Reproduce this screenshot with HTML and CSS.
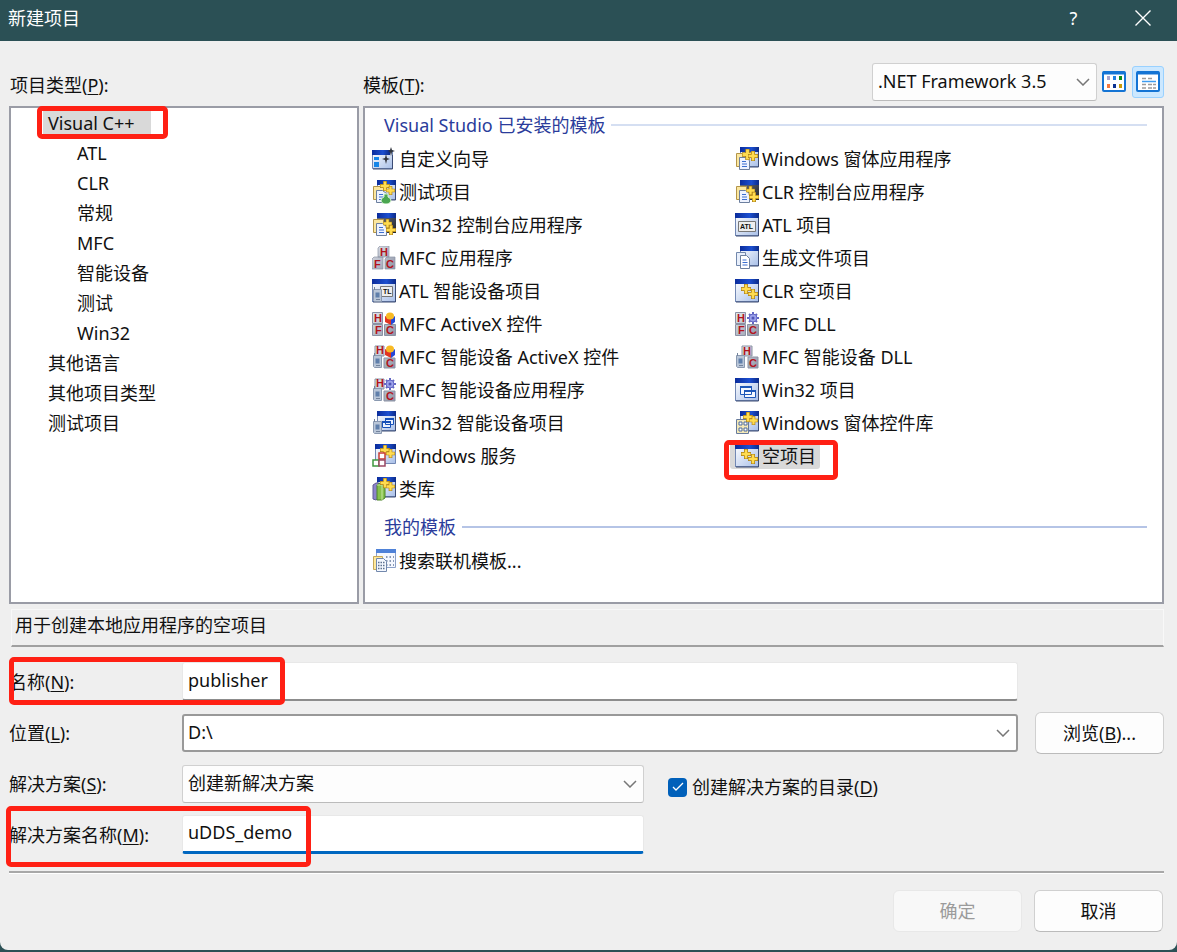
FILE: index.html
```html
<!DOCTYPE html>
<html lang="zh-CN">
    <head>
        <meta charset="UTF-8" />
        <meta name="viewport" content="width=device-width, initial-scale=1.0" />
        <title>新建项目</title>
        <link rel="stylesheet" href="styles.css">
    </head>
    <body>
        <!-- ICON PARTS -->
        <svg class="defs" width="0" height="0" aria-hidden="true">
            <defs>
                <linearGradient id="bar" x1="0" x2="1"><stop offset="0" stop-color="#0a2c9c"/><stop offset="0.6" stop-color="#1c4fd0"/><stop offset="1" stop-color="#0b2a88"/></linearGradient>
                <linearGradient id="pane" x1="0" y1="0" x2="1" y2="1"><stop offset="0" stop-color="#ffffff"/><stop offset="1" stop-color="#a8bfe8"/></linearGradient>
                <linearGradient id="dark" x1="0" y1="0" x2="1" y2="1"><stop offset="0" stop-color="#6b7488"/><stop offset="1" stop-color="#20242e"/></linearGradient>
                <linearGradient id="cube" x1="0" y1="0" x2="1" y2="1"><stop offset="0" stop-color="#e4e7ee"/><stop offset="1" stop-color="#8d94a6"/></linearGradient>
                <symbol id="plus" viewBox="0 0 10 10"><path d="M5 0v10M0 5h10" stroke="#a87c14" stroke-width="4"/><path d="M5 .5v9M.5 5h9" stroke="#ffdc50" stroke-width="2.6"/></symbol>
                <symbol id="window" viewBox="0 0 24 24"><rect x=".5" y=".5" width="23" height="22" fill="url(#pane)" stroke="#7288b4"/><path d="M0 0h24v5H0z" fill="url(#bar)"/><path d="M23.5 5v18H1" fill="none" stroke="#3c4c74"/></symbol>
                <symbol id="small-window" viewBox="0 0 24 24"><rect x="5.5" y=".5" width="18" height="19" fill="url(#pane)" stroke="#7288b4"/><path d="M5 0h19v5H5z" fill="url(#bar)"/><path d="M23.5 5v15H9" fill="none" stroke="#3c4c74"/></symbol>
                <symbol id="docs" viewBox="0 0 24 24"><path d="M1.5 6.5h10v13h-10z" fill="#fbe7a0" stroke="#b49548"/><path d="M4.500 10.500h6l4 3v9h-10z" fill="#eef3ff" stroke="#6c7f9e"/><path d="M7 14.500h4M7 17h5M7 19.500h5" stroke="#3c6fd0"/></symbol>
                <symbol id="device" viewBox="0 0 24 24"><path d="M1.5 10.5h8v12h-7l-1-1z" fill="#b9c6d8" stroke="#8a99b0"/><path d="M3.500 13.500h4v5h-4z" fill="#5f7fab"/><path d="M2.500 11V8M4 20.500h4" stroke="#73839c"/></symbol>

                <symbol id="i-wizard" viewBox="0 0 24 24"><path d="M.5 3.500h20v18H.5z" fill="url(#pane)" stroke="#7288b4"/><path d="M0 3h18v5H0z" fill="url(#bar)"/><path d="M2 10h5v3H2zM2 15h5v5H2z" fill="#1686e8"/><path d="M20.500 8v14H1" stroke="#3c4c74" fill="none"/><path d="M14 7l1 4 3 1-3 1-1 4-1-4-3-1 3-1zM19 0l1 3 3 1-3 1-1 4-1-4-2-1 2-1z" fill="#30343c"/></symbol>
                <symbol id="i-test" viewBox="0 0 24 24"><use href="#small-window"/><use href="#docs"/><use href="#plus" x="8" y="1" width="10" height="10"/><use href="#plus" x="14" y="6" width="9" height="9"/><path d="M12 14h4v3c5 2 3 7-2 7s-7-5-2-7z" fill="#4aa650" stroke="#d7f3d2"/></symbol>
                <symbol id="i-console" viewBox="0 0 24 24"><path d="M5 0h19v20H5z" fill="url(#dark)"/><path d="M5 0h19v5H5z" fill="url(#bar)"/><use href="#docs"/><use href="#plus" x="11" y="6" width="9" height="9"/><use href="#plus" x="14" y="12" width="10" height="10"/></symbol>
                <symbol id="i-forms" viewBox="0 0 24 24"><use href="#small-window"/><use href="#docs"/><use href="#plus" x="7" y="2" width="11" height="11"/><use href="#plus" x="13" y="4" width="10" height="10"/></symbol>
                <symbol id="i-mfc" viewBox="0 0 24 24"><path d="M6 2l2-2h9v11H6zM0 13l2-2h9v12H0zM13 13l2-2h8v12H13z" fill="url(#cube)" stroke="#8b92a4" stroke-width=".7"/><g class="cube-text"><text x="8" y="10">H</text><text x="2" y="22">F</text><text x="14" y="22">C</text></g></symbol>
                <symbol id="i-atldev" viewBox="0 0 24 24"><use href="#window"/><path d="M8.500 7.500h12v10h-12z" fill="#eee" stroke="#777"/><text class="tag" x="11" y="15">TL</text><use href="#device"/></symbol>
                <symbol id="ball" viewBox="0 0 24 24"><path d="M13 4l6 3v6l-6-3z" fill="#e03522"/><path d="M19 7l4-3v6l-4 3z" fill="#2447d8"/><ellipse cx="18" cy="4" rx="4" ry="3.500" fill="#f8ba25"/></symbol>
                <symbol id="i-mfcx" viewBox="0 0 24 24"><path d="M.5.5h10v11H.5zM.5 12.500h10v11H.5zM12.500 12.500h11v11h-11z" fill="url(#cube)" stroke="#8b92a4"/><g class="cube-text"><text x="2" y="10">H</text><text x="3" y="22">F</text><text x="14" y="22">C</text></g><use href="#ball"/></symbol>
                <symbol id="i-mfcxdev" viewBox="0 0 24 24"><path d="M3 1h9v10H3zM12 13h11v10H12z" fill="url(#cube)" stroke="#8b92a4"/><g class="cube-text"><text x="4" y="9">H</text><text x="14" y="22">C</text></g><use href="#ball"/><use href="#device"/></symbol>
                <symbol id="gear" viewBox="0 0 12 12"><path d="M6 0v12M0 6h12M2 2l8 8M10 2l-8 8" stroke="#6468c4" stroke-width="2"/><circle cx="6" cy="6" r="4" fill="#9ba1ea" stroke="#6468c4"/><circle cx="6" cy="6" r="1.500" fill="#5055b8"/></symbol>
                <symbol id="i-mfcdll" viewBox="0 0 24 24"><path d="M.5.5h10v11H.5zM.5 12.500h10v11H.5zM12.500 12.500h11v11h-11z" fill="url(#cube)" stroke="#8b92a4"/><g class="cube-text"><text x="2" y="10">H</text><text x="3" y="22">F</text><text x="14" y="22">C</text></g><use href="#gear" x="12" width="12" height="12"/></symbol>
                <symbol id="i-mfcdev" viewBox="0 0 24 24"><path d="M3 1h9v10H3zM12 13h11v10H12z" fill="url(#cube)" stroke="#8b92a4"/><g class="cube-text"><text x="4" y="9">H</text><text x="14" y="22">C</text></g><use href="#gear" x="12" width="12" height="12"/><use href="#device"/></symbol>
                <symbol id="i-mfcdevdll" viewBox="0 0 24 24"><path d="M7 1h10v10H7zM13 12h10v11H13z" fill="url(#cube)" stroke="#8b92a4"/><g class="cube-text"><text x="8" y="10">H</text><text x="14" y="22">C</text></g><use href="#device"/></symbol>
                <symbol id="i-win32dev" viewBox="0 0 24 24"><use href="#small-window"/><path d="M13.500 7.500h8v6h-8zM10.500 10.500h8v6h-8z" fill="#eaf2ff" stroke="#1650b8"/><path d="M13 8h9M10 11h9" stroke="#1650b8" stroke-width="2"/><use href="#device"/></symbol>
                <symbol id="i-win32" viewBox="0 0 24 24"><use href="#window"/><path d="M5.500 8.500h11v8h-11zM9.500 12.500h11v7h-11z" fill="#f5f9ff" stroke="#1d57b8"/><path d="M5 9h12M9 13h12" stroke="#1d57b8" stroke-width="2"/></symbol>
                <symbol id="i-atl" viewBox="0 0 24 24"><use href="#window"/><path d="M3.500 8.500h17v10h-17z" fill="#eee" stroke="#777"/><text class="tag" x="5" y="16">ATL</text></symbol>
                <symbol id="i-make" viewBox="0 0 24 24"><use href="#small-window"/><path d="M1.500 6.500h9v13h-9z" fill="#e8effb" stroke="#7288ac"/><path d="M5.500 9.500h6l3 3v10h-9z" fill="#fff" stroke="#6c7f9e"/><path d="M7.500 14h4M7.500 16.500h5M7.500 19h5" stroke="#3c6fd0"/></symbol>
                <symbol id="i-empty" viewBox="0 0 24 24"><use href="#window"/><use href="#plus" x="6" y="5" width="10" height="10"/><use href="#plus" x="13" y="10" width="10" height="10"/></symbol>
                <symbol id="i-service" viewBox="0 0 24 24"><path d="M3.500.5h20v19h-20z" fill="url(#pane)" stroke="#7288b4"/><path d="M3 0h21v5H3z" fill="url(#bar)"/><use href="#plus" x="8" y="1" width="10" height="10"/><use href="#plus" x="14" y="5" width="9" height="9"/><path d="M7 9h6v6H7z" fill="#fff" stroke="#c83c35" stroke-width="1.500"/><path d="M1 16h6v6H1z" fill="#fff" stroke="#3e983f" stroke-width="1.500"/><path d="M7 16h6v6H7z" fill="#fff" stroke="#9a4965" stroke-width="1.500"/></symbol>
                <symbol id="i-library" viewBox="0 0 24 24"><use href="#small-window"/><path d="M1 8l3-2h3v15l-3 2-3-1z" fill="#8d83cc" stroke="#5f5a94"/><path d="M5 8l3-2h5v15l-3 2H5z" fill="#86c04c" stroke="#4b8428"/><path d="M5 8h5v15" stroke="#c6e9a0" fill="none"/><use href="#plus" x="8" y="1" width="10" height="10"/><use href="#plus" x="14" y="5" width="9" height="9"/></symbol>
                <symbol id="i-control" viewBox="0 0 24 24"><use href="#small-window"/><path d="M1.500 8.500h12v14h-12z" fill="#f4e9b8" stroke="#667a9c"/><path d="M4 11h3v3H4zM9 11h3v3H9zM4 17h3v3H4zM9 17h3v3H9z" fill="#fff" stroke="#4d6a9c"/><use href="#plus" x="8" y="1" width="10" height="10"/><use href="#plus" x="14" y="5" width="9" height="9"/></symbol>
                <symbol id="i-search" viewBox="0 0 24 24"><path d="M4.500.5h19v18h-19z" fill="#f5f8ff" stroke="#8ca1c8"/><path d="M4 0h20v4H4z" fill="#4f82d8"/><path d="M14 8h8M14 12h8M14 16h8" stroke="#667a9c" stroke-width="1.500" stroke-dasharray="1.500 2"/><path d="M1.500 7.500h9v13h-9z" fill="#ffe99d" stroke="#c7a959"/><path d="M4.500 9.500h7l3 3v10h-10z" fill="#f4f8ff" stroke="#7288ac"/><path d="M6 13.500h7M6 16.500h7M6 19.500h7" stroke="#5d718f" stroke-width="1.500" stroke-dasharray="1.500 1"/></symbol>
            </defs>
        </svg>

        <header class="titlebar">
            <h1>新建项目</h1>
            <button class="caption" type="button" aria-label="帮助">?</button>
            <button class="caption" type="button" aria-label="关闭">
                <svg width="16" height="16" viewBox="0 0 16 16"><path d="M.5.5l15 15M15.500.5l-15 15" stroke="#fff" stroke-width="1.400"/></svg>
            </button>
        </header>

        <main class="dialog">
            <div class="heads">
                <span class="head-types">项目类型(<u>P</u>):</span>
                <span class="head-templates">模板(<u>T</u>):</span>
                <select class="field drop framework" aria-label="Framework">
                    <option>.NET Framework 3.5</option>
                </select>
                <button class="view" type="button" aria-label="大图标">
                    <svg width="24" height="22" viewBox="0 0 24 22"><rect x="1" y="1" width="22" height="19" rx="1" fill="#fff" stroke="#1474d4" stroke-width="2"/><path d="M1 2h22" stroke="#1474d4" stroke-width="3"/><path d="M5 5h3v4H5z" fill="#aaa4cc"/><path d="M11 5h3v4h-3z" fill="#1d80e0"/><path d="M17 5h3v4h-3z" fill="#0a8c18"/><path d="M5 13h3v4H5z" fill="#f4783e"/><path d="M11 13h3v4h-3z" fill="#0b3291"/><path d="M17 13h3v4h-3z" fill="#c99a06"/></svg>
                </button>
                <button class="view view-on" type="button" aria-label="小图标">
                    <svg width="24" height="22" viewBox="0 0 24 22"><rect x="1" y="1" width="22" height="19" rx="1" fill="#fff" stroke="#1474d4" stroke-width="2"/><path d="M1 2h22" stroke="#1474d4" stroke-width="3"/><path d="M6 7.500h4M12 7.500h4M6 13.500h4M12 13.500h4M17 13.500h3M6 17h4M12 17h4M17 17h3" stroke="#9b9b9b" stroke-width="1.500"/><path d="M6 10.500h14" stroke="#3d9cf0" stroke-width="1.500"/></svg>
                </button>
            </div>

            <div class="panels">
                <ul class="panel tree">
                    <li class="marked"><span class="selected">Visual C++</span><i class="mark mark-tree"></i></li>
                    <li class="child">ATL</li>
                    <li class="child">CLR</li>
                    <li class="child">常规</li>
                    <li class="child">MFC</li>
                    <li class="child">智能设备</li>
                    <li class="child">测试</li>
                    <li class="child">Win32</li>
                    <li>其他语言</li>
                    <li>其他项目类型</li>
                    <li>测试项目</li>
                </ul>

                <div class="panel templates">
                    <h2>Visual Studio 已安装的模板</h2>
                    <ul class="items">
                        <li><svg><use href="#i-wizard"/></svg>自定义向导</li>
                        <li><svg><use href="#i-forms"/></svg>Windows 窗体应用程序</li>
                        <li><svg><use href="#i-test"/></svg>测试项目</li>
                        <li><svg><use href="#i-console"/></svg>CLR 控制台应用程序</li>
                        <li><svg><use href="#i-console"/></svg>Win32 控制台应用程序</li>
                        <li><svg><use href="#i-atl"/></svg>ATL 项目</li>
                        <li><svg><use href="#i-mfc"/></svg>MFC 应用程序</li>
                        <li><svg><use href="#i-make"/></svg>生成文件项目</li>
                        <li><svg><use href="#i-atldev"/></svg>ATL 智能设备项目</li>
                        <li><svg><use href="#i-empty"/></svg>CLR 空项目</li>
                        <li><svg><use href="#i-mfcx"/></svg>MFC ActiveX 控件</li>
                        <li><svg><use href="#i-mfcdll"/></svg>MFC DLL</li>
                        <li><svg><use href="#i-mfcxdev"/></svg>MFC 智能设备 ActiveX 控件</li>
                        <li><svg><use href="#i-mfcdevdll"/></svg>MFC 智能设备 DLL</li>
                        <li><svg><use href="#i-mfcdev"/></svg>MFC 智能设备应用程序</li>
                        <li><svg><use href="#i-win32"/></svg>Win32 项目</li>
                        <li><svg><use href="#i-win32dev"/></svg>Win32 智能设备项目</li>
                        <li><svg><use href="#i-control"/></svg>Windows 窗体控件库</li>
                        <li><svg><use href="#i-service"/></svg>Windows 服务</li>
                        <li class="marked"><span class="picked"><svg><use href="#i-empty"/></svg>空项目</span><i class="mark mark-item"></i></li>
                        <li><svg><use href="#i-library"/></svg>类库</li>
                    </ul>
                    <h2 class="mine">我的模板</h2>
                    <ul class="items">
                        <li><svg><use href="#i-search"/></svg>搜索联机模板...</li>
                    </ul>
                </div>
            </div>

            <p class="description">用于创建本地应用程序的空项目</p>

            <form class="form">
                <label for="name">名称(<u>N</u>):</label>
                <input id="name" class="field text wide" type="text" value="publisher" />
                <i class="mark mark-name"></i>

                <label for="location">位置(<u>L</u>):</label>
                <select id="location" class="field drop combo wide">
                    <option>D:\</option>
                </select>
                <button class="button" type="button"><span>浏览(<u>B</u>)...</span></button>

                <label for="solution">解决方案(<u>S</u>):</label>
                <select id="solution" class="field drop">
                    <option>创建新解决方案</option>
                </select>
                <label class="check"><input type="checkbox" checked /><span>创建解决方案的目录(<u>D</u>)</span></label>

                <label for="solution-name">解决方案名称(<u>M</u>):</label>
                <input id="solution-name" class="field text active" type="text" value="uDDS_demo" />
                <i class="mark mark-solution"></i>
            </form>

            <footer class="actions">
                <button class="button" type="button" disabled>确定</button>
                <button class="button" type="button">取消</button>
            </footer>
        </main>
    </body>
</html>
```

FILE: styles.css
```css
* {
    box-sizing: border-box;
    margin: 0;
    padding: 0;
}

body {
    display: flex;
    flex-direction: column;
    min-height: 100vh;
    padding-bottom: 2px;
    font-family: "Noto Sans", "Noto Sans CJK SC", sans-serif;
    font-size: 18px;
    line-height: 24px;
    color: #111;
    background: #2b5055;
}

button,
input,
select {
    font: inherit;
    color: inherit;
}

ul {
    list-style: none;
}

u {
    text-underline-offset: 2px;
}

.defs {
    position: absolute;
}

.cube-text {
    font: bold 11px "Liberation Sans", sans-serif;
    fill: #b3141c;
}

.tag {
    font: bold 7px "Liberation Sans", sans-serif;
    fill: #111;
}

/* title bar */
.titlebar {
    display: flex;
    align-items: center;
    height: 41px;
    padding: 0 0 6px 8px;
    color: white;
}

.titlebar h1 {
    flex: 1;
    font-size: 18px;
    font-weight: normal;
}

.caption {
    display: flex;
    align-items: center;
    justify-content: center;
    width: 69px;
    height: 35px;
    background: none;
    border: none;
}

/* dialog */
.dialog {
    flex: 1;
    padding: 20px 13px 18px 9px;
    background: #efefef;
    border-radius: 0 0 8px 8px;
}

.heads {
    display: flex;
    align-items: center;
    height: 45px;
    padding-bottom: 3px;
}

.head-types {
    width: 354px;
    padding: 5px 0 0 1px;
}

.head-templates {
    flex: 1;
    padding-top: 5px;
}

.field {
    width: 100%;
    min-width: 0;
    padding: 0 5px;
    background-color: #fdfdfd;
    border: 1px solid #d0d0d0;
    border-radius: 3px;
    outline: none;
}

.drop {
    height: 38px;
    padding-right: 30px;
    padding-bottom: 2px;
    appearance: none;
    background-image: url("data:image/svg+xml,%3Csvg xmlns='http://www.w3.org/2000/svg' width='14' height='8'%3E%3Cpath d='M1 1l6 6 6-6' fill='none' stroke='%23777' stroke-width='1.5'/%3E%3C/svg%3E");
    background-repeat: no-repeat;
    background-position: right 6px center;
    border-bottom-color: #bbb;
}

.framework {
    width: 225px;
}

.view {
    display: flex;
    align-items: center;
    justify-content: center;
    width: 32px;
    height: 32px;
    margin-left: 1px;
    background: none;
    border: 1px solid transparent;
    border-radius: 3px;
}

.view-on {
    margin-left: 2px;
    background: #cce8ff;
    border-color: #99d1ff;
}

/* lists */
.panels {
    display: grid;
    grid-template-columns: 350px 1fr;
    gap: 4px;
}

.panel {
    min-height: 498px;
    background: white;
    border: 2px solid #9a9ca6;
}

.tree li {
    display: flex;
    align-items: center;
    height: 30px;
    padding-left: 37px;
}

.tree .child {
    padding-left: 66px;
}

.marked {
    position: relative;
}

.selected {
    min-width: 108px;
    margin-left: -5px;
    padding: 0 5px;
    background: #d9d9d9;
}

.templates h2 {
    display: flex;
    align-items: center;
    gap: 6px;
    height: 34px;
    padding: 0 15px 0 19px;
    font-size: 18px;
    font-weight: normal;
    color: #2b3c9b;
}

.templates h2::after {
    content: "";
    flex: 1;
    height: 2px;
    background: #d5dff2;
}

.templates .mine {
    margin-top: 5px;
}

.templates .mine::after {
    background: #b5c4e6;
}

.items {
    display: grid;
    grid-template-columns: 363px 1fr;
    padding-left: 7px;
}

.items li,
.picked {
    display: flex;
    align-items: center;
    gap: 3px;
}

.items li {
    height: 33px;
    white-space: nowrap;
}

.items svg {
    width: 24px;
    height: 24px;
}

.picked {
    margin-left: -5px;
    padding: 1px 4px 1px 5px;
    background: #d9d9d9;
    border-radius: 3px;
}

.description {
    height: 38px;
    margin: 5px 0 15px 2px;
    padding: 3px;
    border: 1px solid #f8f8f8;
    border-bottom: 2px solid #a0a0a0;
}

/* project form */
.form {
    position: relative;
    display: grid;
    grid-template-columns: 173px 462px 1fr 129px;
    grid-auto-rows: 39px;
    row-gap: 12px;
    align-items: center;
    padding-bottom: 17px;
    border-bottom: 2px solid #a8a8a8;
    box-shadow: 0 1px 0 white;
}

.form > label {
    grid-column: 1;
}

.form .wide {
    grid-column: 2 / 4;
    width: auto;
    margin-right: 17px;
}

.text {
    height: 39px;
    padding-bottom: 3px;
    background: white;
    border-color: #e8e8e8;
    border-bottom: 2px solid #8c8c8c;
}

.active {
    border-bottom: 3px solid #0067c0;
}

.combo {
    padding-left: 4px;
    background-color: white;
    border: 2px solid #999;
}

.form .check {
    grid-column: 3 / 5;
    display: flex;
    align-items: center;
    gap: 5px;
    padding: 7px 0 0 24px;
}

.check input {
    width: 19px;
    height: 19px;
    appearance: none;
    background: #0060ba url("data:image/svg+xml,%3Csvg xmlns='http://www.w3.org/2000/svg' width='12' height='10'%3E%3Cpath d='M1 5l3 3 7-7' fill='none' stroke='white' stroke-width='1.3'/%3E%3C/svg%3E") no-repeat center;
    border-radius: 4px;
}

.button {
    width: 129px;
    height: 42px;
    background: #fdfdfd;
    border: 1px solid #d0d0d0;
    border-bottom-color: #bbb;
    border-radius: 6px;
}

.button:disabled {
    color: #9b9b9b;
    background: #f8f8f8;
    border-color: #e8e8e8;
}

.actions {
    display: flex;
    justify-content: flex-end;
    gap: 12px;
    padding: 17px 1px 0 0;
}

/* red frames over the values to fill in */
.mark {
    position: absolute;
    border: 5px solid #ff2014;
    border-radius: 5px;
    pointer-events: none;
}

.mark-tree {
    left: 26px;
    top: -2px;
    width: 131px;
    height: 33px;
}

.mark-item {
    left: -11px;
    top: 1px;
    width: 114px;
    height: 40px;
}

.mark-name {
    left: 0;
    top: -5px;
    width: 276px;
    height: 48px;
}

.mark-solution {
    left: -3px;
    top: 144px;
    width: 305px;
    height: 61px;
}
```
